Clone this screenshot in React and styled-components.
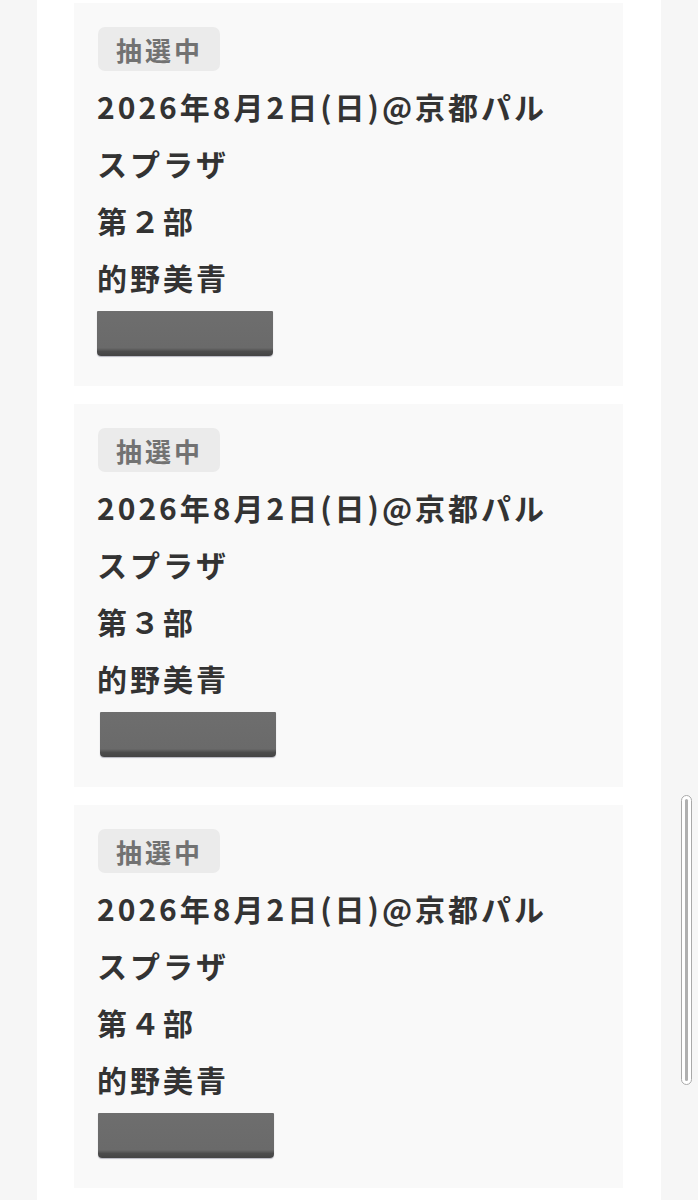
import React from 'react';
import styled, { createGlobalStyle } from 'styled-components';

const GlobalStyle = createGlobalStyle`
  html, body {
    margin: 0;
    padding: 0;
    background: #f6f6f6;
    font-family: "Noto Sans CJK JP", "Noto Sans", sans-serif;
  }
`;

const Page = styled.div`
  display: flex;
  justify-content: center;
  min-height: 1200px;
  background: #f6f6f6;
  overflow: hidden;
`;

const Column = styled.main`
  width: 624px;
  background: #ffffff;
  padding: 3px 38px 0 37px;
  box-sizing: border-box;
  display: flex;
  flex-direction: column;
  gap: 18px;
`;

const Card = styled.section`
  background: #f9f9f9;
  padding: 24px 23px 30px;
  display: flex;
  flex-direction: column;
  align-items: flex-start;
`;

const Badge = styled.span`
  display: inline-flex;
  align-items: center;
  height: 44px;
  padding: 0 17px 0 18px;
  margin-left: 1px;
  border-radius: 7px;
  background: #ebebeb;
  color: #727272;
  font-size: 26px;
  font-weight: 700;
  letter-spacing: 3px;
  margin-bottom: 7px;
`;

const Lines = styled.div`
  width: 465px;
  color: #333333;
  font-size: 30px;
  font-weight: 700;
  line-height: 57px;
  letter-spacing: 3px;
`;

const Line = styled.div``;

const Redacted = styled.div`
  width: 176px;
  height: 45px;
  margin-top: 5px;
  margin-left: ${(p) => p.$nudge || 0}px;
  background: linear-gradient(#6e6e6e, #6a6a6a 82%, #4c4c4c 90%, #444 100%);
  border-radius: 1px 1px 4px 4px;
  box-shadow: 0 1px 1px rgba(60, 60, 90, 0.35);
`;

const Scrollbar = styled.div`
  position: fixed;
  left: 681px;
  top: 795px;
  width: 11px;
  height: 290px;
  box-sizing: border-box;
  border: 1.5px solid #a9a9a9;
  border-radius: 6px;
  background: #fff;
  display: flex;
  justify-content: center;
  padding: 3px 0;

  &::after {
    content: '';
    width: 3px;
    border-radius: 2px;
    background: #b0b0b0;
  }
`;

const entries = [
  { part: '第２部', nudge: 0 },
  { part: '第３部', nudge: 3 },
  { part: '第４部', nudge: 1 },
];

export default function App() {
  return (
    <>
      <GlobalStyle />
      <Page>
        <Column>
          {entries.map((e) => (
            <Card key={e.part}>
              <Badge>抽選中</Badge>
              <Lines>
                <Line>2026年8月2日(日)@京都パルスプラザ</Line>
                <Line>{e.part}</Line>
                <Line>的野美青</Line>
              </Lines>
              <Redacted $nudge={e.nudge} />
            </Card>
          ))}
        </Column>
      </Page>
      <Scrollbar />
    </>
  );
}
